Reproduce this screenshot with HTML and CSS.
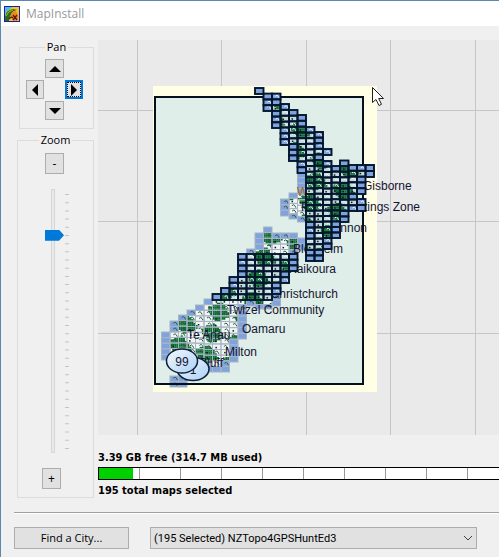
FILE: index.html
```html
<!DOCTYPE html>
<html lang="en">
<head>
<meta charset="utf-8">
<title>MapInstall</title>
<link rel="stylesheet" href="styles.css">
</head>
<body>
<div class="window">
  <header class="titlebar">
    <svg class="app-icon" viewBox="0 0 16 16" aria-hidden="true">
      <rect width="16" height="16" fill="#1420b4"/>
      <rect x="1" y="1" width="14" height="14" fill="#f0c428"/>
      <path d="M1 1h7L1 8z" fill="#58b8d8"/>
      <path d="M1 11Q2 4 9 3l4 1Q6 5 5 15H1z" fill="#2c6c1c"/>
      <path d="M2 10Q4 5 9 4" fill="none" stroke="#9cc828"/>
      <path d="M7 12Q6 6 11 5q4 2 3 9l-4 1z" fill="#f08820"/>
      <path d="M9 9l4 5M13 9l-4 5M5 13q2-3 4-1" stroke="#5c1808" stroke-width="1.3" fill="none"/>
    </svg>
    <h1 class="title">MapInstall</h1>
  </header>

  <main class="workspace">
    <aside class="tools">
      <fieldset class="group pan">
        <legend>Pan</legend>
        <div class="pad">
          <button class="key up" aria-label="Pan up"><svg viewBox="0 0 12 6"><path d="M0 6L6 0l6 6z"/></svg></button>
          <button class="key left" aria-label="Pan left"><svg viewBox="0 0 6 12"><path d="M6 0L0 6l6 6z"/></svg></button>
          <button class="key right focused" aria-label="Pan right"><svg viewBox="0 0 6 12"><path d="M0 0l6 6-6 6z"/></svg></button>
          <button class="key down" aria-label="Pan down"><svg viewBox="0 0 12 6"><path d="M0 0h12L6 6z"/></svg></button>
        </div>
      </fieldset>
      <fieldset class="group zoom">
        <legend>Zoom</legend>
        <button class="step" aria-label="Zoom out">-</button>
        <div class="scale">
          <input class="slider" type="range" min="0" max="31" value="5" aria-label="Zoom level">
          <svg class="ticks" viewBox="0 0 4 255" aria-hidden="true"><path d="M2 0V255" stroke="#c4c4c4" stroke-width="4" stroke-dasharray="1 7.19"/></svg>
        </div>
        <button class="step plus" aria-label="Zoom in">+</button>
      </fieldset>
    </aside>

    <section class="content">
      <svg class="map" viewBox="98 40 401 395" preserveAspectRatio="xMinYMin slice" role="img" aria-label="Map of New Zealand">
        <g class="graticule">
          <path d="M137.500 40V435M221.500 40V435M306.500 40V435M390.500 40V435M475.500 40V435M98 110.500H499M98 221.500H499M98 333.500H499"/>
        </g>
        <rect x="153" y="86" width="224" height="306" fill="#ffffe6"/>
        <rect x="155" y="97" width="208" height="287" fill="#dfeee8"/>
        <g id="plain"></g>
        <g class="places">
          <text x="297" y="196" fill="#a06a20">W</text>
          <text x="301" y="211">P</text>
          <text x="363" y="190">Gisborne</text>
          <text x="420" y="211" text-anchor="end">Hastings Zone</text>
          <text x="367" y="232" text-anchor="end">Shannon</text>
          <text x="293" y="253">Blenheim</text>
          <text x="336" y="273" text-anchor="end">Kaikoura</text>
          <text x="338" y="298" text-anchor="end">Christchurch</text>
          <text x="227" y="314">Twizel Community</text>
          <text x="242" y="333">Oamaru</text>
          <text x="187" y="339">Te Anau</text>
          <text x="225" y="356">Milton</text>
          <text x="223" y="367" text-anchor="end">Bluff</text>
        </g>
        <rect x="155" y="97" width="208" height="287" fill="none" stroke="#04101c" stroke-width="2"/>
        <g id="selected"></g>
        <defs>
          <linearGradient id="bubble" x1="0" y1="0" x2="1" y2="1"><stop offset="0" stop-color="#f4faff"/><stop offset="1" stop-color="#acd0f4"/></linearGradient>
        </defs>
        <g class="badges">
          <ellipse cx="193" cy="369" rx="16" ry="11.500"/>
          <text x="193" y="374">1</text>
          <ellipse cx="182" cy="361" rx="15.500" ry="12"/>
          <text x="182" y="366">99</text>
        </g>
        <path d="M372.500 87.500v15l3.500-3 3 6 2.500-1.200-2.800-5.800h4.800z" fill="#fff" stroke="#222"/>
      </svg>
      <p class="stat">3.39 GB free (314.7 MB used)</p>
      <div class="capacity"><div class="used"></div></div>
      <p class="stat">195 total maps selected</p>
    </section>
  </main>

  <footer class="actions">
    <button class="find">Find a City...</button>
    <div class="picker">
      <select aria-label="Map product"><option>(195 Selected) NZTopo4GPSHuntEd3</option></select>
      <svg viewBox="0 0 10 6" aria-hidden="true"><path d="M1 1l4 4 4-4"/></svg>
    </div>
  </footer>
</div>
<script src="map.js"></script>
</body>
</html>
```
FILE: styles.css
```css
* { box-sizing: border-box; }

body {
  margin: 0;
  background: #f0f0f0;
  color: #000;
  font: 11px/16px "Open Sans", "Liberation Sans", sans-serif;
}

.window {
  display: flex;
  flex-direction: column;
  min-height: 100vh;
  border: solid #5f86ab;
  border-width: 1px 0 1px 1px;
}

.titlebar {
  display: flex;
  align-items: center;
  gap: 6px;
  height: 25px;
  padding-left: 3px;
  background: #fff;
}
.app-icon { width: 16px; height: 16px; }
.title {
  margin: 0;
  color: #999;
  font: 12px/16px "Open Sans", sans-serif;
}

.workspace {
  display: flex;
  gap: 4px;
  padding: 14px 0 0 16px;
}

.tools { width: 77px; flex: none; }
.group {
  margin: 0;
  padding: 0;
  min-width: 0;
  border: 1px solid #dcdcdc;
}
.group legend {
  margin: 0 auto;
  padding: 0 2px;
  line-height: 14px;
}
.pan { margin-left: 2px; height: 89px; }
.zoom {
  margin-top: 4px;
  height: 365px;
}

button {
  padding: 0;
  border: 1px solid #adadad;
  background: #e1e1e1;
  color: #000;
  font: inherit;
}

.pad {
  display: grid;
  grid-template-columns: 18px 19px 18px;
  grid-template-rows: 19px 19px 19px;
  grid-template-areas: ". u ." "l . r" ". d .";
  gap: 2px 1px;
  padding: 5px 0 0 6px;
}
.key {
  display: flex;
  align-items: center;
  justify-content: center;
}
.key svg { width: 12px; height: 12px; flex: none; }
.up { grid-area: u; }
.left { grid-area: l; }
.right { grid-area: r; }
.down { grid-area: d; }
.focused {
  border: 2px solid #0078d7;
  outline: 1px dotted #000;
  outline-offset: -3px;
}

.step {
  display: block;
  width: 19px;
  height: 21px;
  margin: 6px 0 0 27px;
  font-size: 12px;
}
.plus { margin: 15px 0 0 24px; }
.scale {
  display: flex;
  gap: 1px;
  margin: 15px 0 0 27px;
}
.slider {
  appearance: none;
  writing-mode: vertical-lr;
  width: 19px;
  height: 264px;
  margin: 0;
  background: linear-gradient(#e7eaea, #e7eaea) 7px 1px / 2px 262px no-repeat,
    linear-gradient(#d6d6d6, #d6d6d6) 6px 0 / 4px 264px no-repeat;
}
.slider::-webkit-slider-thumb {
  appearance: none;
  width: 19px;
  height: 11px;
  background: #0078d7;
  clip-path: polygon(0 0, 14px 0, 100% 50%, 14px 100%, 0 100%);
}
.ticks { width: 4px; height: 255px; margin-top: 5px; }

.content { flex: 1; min-width: 0; }
.map {
  display: block;
  width: 100%;
  height: 395px;
  background: #eaeaea;
}
.graticule { fill: none; stroke: #c6c6c6; }
.places, .badges { font: 12px "Liberation Sans", sans-serif; fill: #141432; }
.badges { text-anchor: middle; }
.badges ellipse { fill: url(#bubble); stroke: #0c2036; stroke-width: 1.5px; }

.stat {
  margin: 0;
  font: bold 11px/16px "DejaVu Sans Condensed", "Noto Sans", sans-serif;
}
.map + .stat { margin-top: 15px; }
.capacity {
  height: 13px;
  margin: 1px 0 3px;
  border: solid #000;
  border-width: 1px 0 1px 1px;
  background: repeating-linear-gradient(90deg, #fff 0 40px, #999 40px 41px);
}
.used { width: 34px; height: 100%; background: #00d000; }

.actions {
  display: flex;
  gap: 21px;
  margin: 13px 0 0 13px;
  padding: 14px 22px 8px 0;
  border-top: 1px solid #a0a0a0;
  box-shadow: inset 0 1px #fff;
}
.find { flex: none; width: 115px; height: 22px; }
.picker { position: relative; flex: 1; }
select {
  appearance: none;
  display: block;
  width: 100%;
  height: 22px;
  padding: 0 24px 0 3px;
  border: 1px solid #adadad;
  border-radius: 0;
  background: #e1e1e1;
  color: #000;
  font: 11px Roboto, "Liberation Sans", sans-serif;
}
.picker svg {
  position: absolute;
  right: 4px;
  top: 8px;
  width: 10px;
  height: 6px;
  fill: none;
  stroke: #444;
}
```
FILE: map.js
```js
// Map tiles sit on a fixed grid; every entry is [column, top, bottom].
const LEFT = 153, TILE_W = 8.5, TILE_H = 5.6;

const selectedTiles = [
  [12, 88, 94], [13, 93.6, 111], [14, 93.6, 128], [15, 104, 145], [16, 110, 161],
  [17, 115, 173], [18, 127, 261], [19, 132, 261], [20, 149, 155], [20, 161, 249],
  [21, 166, 238], [22, 160.500, 222], [23, 165, 211], [24, 165, 194], [24, 199, 211], [25, 165, 177],
  [7, 294, 300], [8, 288, 300], [9, 277, 300], [10, 254, 300], [11, 254, 300],
  [12, 254, 300], [13, 254, 300], [14, 254, 294], [15, 254, 283], [16, 254, 271]
];

const plainTiles = [
  [15, 199, 216], [16, 193, 219], [17, 172, 222],
  [11, 249, 255], [12, 233, 255], [13, 227, 255], [14, 233, 255], [15, 233, 255],
  [16, 233, 255], [17, 238, 250], [14, 294, 306], [13, 300, 309], [12, 300, 309], [11, 300, 306],
  [1, 332, 360], [2, 321, 365], [3, 315, 365], [2, 376, 387], [3, 376, 387], [4, 310, 376],
  [5, 305, 376], [6, 299, 372], [7, 299, 372], [8, 299, 372], [9, 299, 362], [10, 299, 339]
];

function noise(a, b) {
  const v = Math.sin(a * 127.1 + b * 311.7) * 43758.5453;
  return v - Math.floor(v);
}

function inside(tiles, col, y) {
  return tiles.some(t => t[0] === col && y > t[1] && y < t[2]);
}

// Forest follows smooth bands so that neighbouring tiles join into patches.
function forest(x, y) {
  return Math.sin(x * 0.21 + y * 0.06) + Math.sin(y * 0.27 - x * 0.09);
}

function draw(id, tiles, style) {
  let ground = "", lines = "";
  for (const [col, top, bottom] of tiles) {
    const x = LEFT + col * TILE_W;
    const rows = Math.max(1, Math.round((bottom - top) / TILE_H));
    const h = (bottom - top) / rows;
    for (let r = 0; r < rows; r++) {
      const y = top + r * h, mid = y + h / 2;
      const coast = !inside(style.land, col - 1, mid) || !inside(style.land, col + 1, mid) ||
        !inside(style.land, col, mid - TILE_H) || !inside(style.land, col, mid + TILE_H);
      const n = noise(col, r);
      ground += `<rect x="${x}" y="${y}" width="${TILE_W}" height="${h}" fill="${coast ? "#7fa3dc" : style.base}"/>`;
      if (!coast) {
        for (let i = 0; i < 4; i++) {
          for (let j = 0; j < 3; j++) {
            const px = x + i * TILE_W / 4, py = y + j * h / 3;
            if (forest(px, py) > style.forest) {
              ground += `<rect x="${px}" y="${py}" width="2.200" height="2" fill="#0a6c30"/>`;
            }
          }
        }
      }
      if (!coast || n > 0.7) {
        const a = x + 1 + n * 3, b = y + 2 + noise(r, col);
        if (n > 0.45) ground += `<path d="M${a} ${b}q2-2 3 0t1 2" stroke="${style.trace}" fill="none"/>`;
        if (n < 0.4) ground += `<rect x="${a + 1}" y="${b}" width="1.500" height="1.500" fill="#10181c"/>`;
      }
      lines += `<rect x="${x}" y="${y}" width="${TILE_W}" height="${h}" fill="none" stroke="${style.line}" stroke-width="${style.weight}"/>`;
    }
  }
  document.getElementById(id).innerHTML = ground + lines;
}

const land = selectedTiles.concat(plainTiles);
draw("plain", plainTiles, { land, base: "#f0f6f4", forest: 0.1, trace: "#2c5c40", line: "#a9b3c6", weight: 1 });
draw("selected", selectedTiles, { land, base: "#c4dade", forest: 0.2, trace: "#eefafa", line: "#04162e", weight: 1.9 });
```
